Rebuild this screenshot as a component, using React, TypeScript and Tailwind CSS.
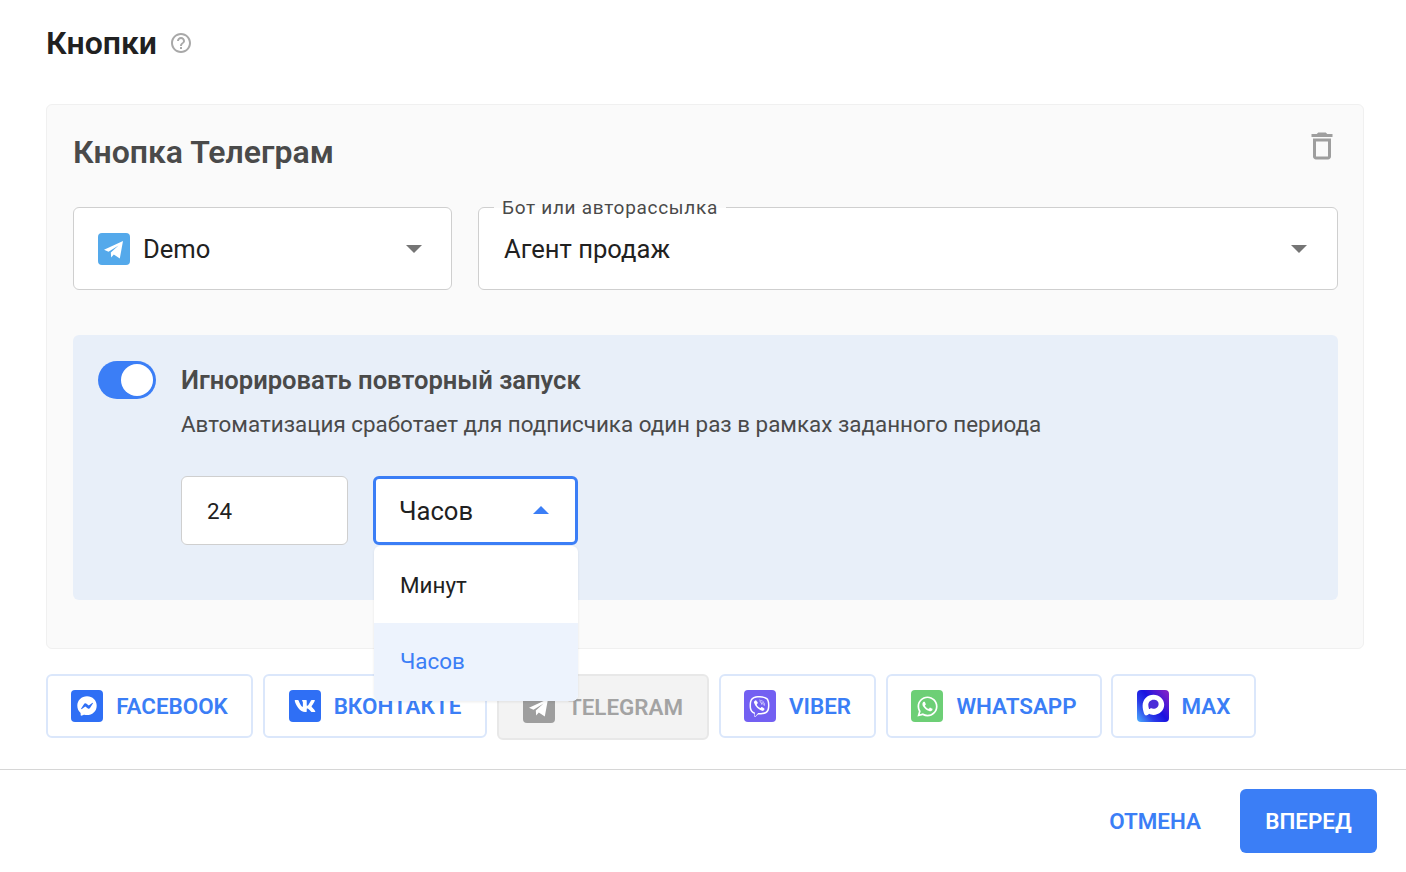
import { FaFacebookMessenger, FaVk, FaViber, FaWhatsapp } from "react-icons/fa";

function Tile({ className, children }: { className: string; children: React.ReactNode }) {
  return <span className={"flex h-8 w-8 shrink-0 items-center justify-center rounded-[4px] text-white " + className}>{children}</span>;
}

function Plane() {
  return (
    <svg width="32" height="32" viewBox="0 0 32 32" fill="#fff">
      <path d="M6 16.800 L25 8 L21.800 25.500 L15.800 21.600 L13.200 24.600 L12.800 19.600 L20.500 12.500 L10.500 18.800 Z" />
    </svg>
  );
}

function Arrow({ up, color }: { up?: boolean; color: string }) {
  return (
    <svg width="16" height="8" viewBox="0 0 16 8" className={up ? "mb-[2px] shrink-0" : "shrink-0"}>
      <path d={up ? "M0 8 L8 0 L16 8 Z" : "M0 0 L8 8 L16 0 Z"} fill={color} />
    </svg>
  );
}

function MaxLogo() {
  return (
    <svg width="32" height="32" viewBox="0 0 32 32">
      <defs>
        <linearGradient id="maxg" x1="0" y1="1" x2="1" y2="0.2">
          <stop offset="0" stopColor="#4fb4ff" />
          <stop offset="0.35" stopColor="#2a3be8" />
          <stop offset="0.6" stopColor="#1a12e0" />
          <stop offset="1" stopColor="#7a1fc9" />
        </linearGradient>
      </defs>
      <rect width="32" height="32" rx="4" fill="url(#maxg)" />
      <path d="M16.400 4.800C10.200 4.800 5.600 9.600 5.600 15.800c0 2.700.6 5 1.300 7.100.5 1.500 1.400 2.900 2.900 2.400 1-.3 1.600-.9 2.300-1.600 1.100.6 2.600 1.200 4.200 1.200 6 0 10.900-4.500 10.900-10.100 0-5.600-4.700-10-10.800-10z" fill="#fff" />
      <path d="M16.500 9.800c-2.900 0-5.200 2.400-5.200 5.300 0 1.300.3 2.500.6 3.400.2.600.6.7 1 .4l1-.8c.7.400 1.500.7 2.500.7 2.900 0 5.200-2.200 5.200-4.900 0-2.600-2.300-4.100-5.100-4.100z" fill="#4a2bd8" />
    </svg>
  );
}

function Channel({ icon, label, className }: { icon: React.ReactNode; label: string; className: string }) {
  return (
    <button className={"flex h-16 items-center justify-center gap-[13px] rounded-[6px] border-2 border-[#dbe7fb] bg-white text-[22.4px] font-semibold text-[#3b7ef6] " + className}>
      {icon}
      <span className="pt-[2px]">{label}</span>
    </button>
  );
}

export default function App() {
  return (
    <div className="flex h-[872px] w-[1406px] flex-col overflow-hidden bg-white font-['Roboto',sans-serif] text-[#212121]">
      <div className="flex-1 pl-[46px] pr-[42px]">
        <div className="flex h-[104px] items-start gap-[12px] pt-[22px]">
          <h1 className="text-[32px] font-semibold leading-[42px]">Кнопки</h1>
          <svg width="24" height="24" viewBox="0 0 24 24" className="mt-[9px]" fill="#a8a8a8">
            <path d="M11 18h2v-2h-2v2zm1-16C6.480 2 2 6.480 2 12s4.480 10 10 10 10-4.480 10-10S17.520 2 12 2zm0 18c-4.410 0-8-3.590-8-8s3.590-8 8-8 8 3.590 8 8-3.590 8-8 8zm0-14c-2.210 0-4 1.790-4 4h2c0-1.100.9-2 2-2s2 .9 2 2c0 2-3 1.750-3 5h2c0-2.250 3-2.500 3-5 0-2.210-1.790-4-4-4z" />
          </svg>
        </div>

        <section className="h-[545px] rounded-[6px] border border-[#f0f0f0] bg-[#fafafa] pl-[26px] pr-[25px]">
          <div className="flex h-[102px] items-start justify-between">
            <h2 className="pt-[26px] text-[32px] font-semibold leading-[42px] text-[#4a4a4a]">Кнопка Телеграм</h2>
            <svg width="36" height="36" viewBox="0 0 24 24" fill="#9e9e9e" className="mr-[-2px] mt-[23px]">
              <path d="M6 19c0 1.100.9 2 2 2h8c1.100 0 2-.9 2-2V7H6v12zM8 9h8v10H8V9zm7.500-5-1-1h-5l-1 1H5v2h14V4h-3.500z" />
            </svg>
          </div>

          <div className="flex gap-[26px]">
            <div className="flex h-[83px] w-[379px] items-center rounded-[6px] border border-[#cfcfcf] bg-white pl-6 pr-[29px]">
              <Tile className="bg-[#54a9eb]"><Plane /></Tile>
              <span className="ml-[13px] flex-1 pt-[2px] text-[25.6px]">Demo</span>
              <Arrow color="#757575" />
            </div>
            <div className="relative flex h-[83px] flex-1 items-center rounded-[6px] border border-[#cfcfcf] bg-white pl-[25px] pr-[30px]">
              <span className="absolute left-[15px] top-[-10px] bg-[linear-gradient(#fafafa_50%,#fff_50%)] px-2 text-[19px] leading-[20px] tracking-[0.7px] text-[#4a4a4a]">Бот или авторассылка</span>
              <span className="flex-1 pt-[2px] text-[25.6px]">Агент продаж</span>
              <Arrow color="#757575" />
            </div>
          </div>

          <div className="mt-[45px] flex h-[265px] gap-[25px] rounded-[6px] bg-[#e8eff9] pl-[25px] pt-[26px]">
            <div className="flex h-[38px] w-[58px] shrink-0 items-center justify-end rounded-full bg-[#3b7ef6] pr-[3px]">
              <span className="h-[32px] w-[32px] rounded-full bg-white" />
            </div>
            <div className="flex-1">
              <div className="text-[25.6px] font-semibold leading-[38px] text-[#4a4a4a]">Игнорировать повторный запуск</div>
              <div className="mt-[10px] text-[22.4px] leading-[30px] text-[#4a4a4a]">Автоматизация сработает для подписчика один раз в рамках заданного периода</div>
              <div className="mt-[37px] flex gap-[25px]">
                <div className="flex h-[69px] w-[167px] items-center rounded-[6px] border border-[#cfcfcf] bg-white pl-[25px] pt-[3px] text-[22.4px]">24</div>
                <div className="relative z-10 w-[205px]">
                  <div className="flex h-[69px] items-center rounded-[6px] border-[3px] border-[#3b7ef6] bg-white pl-[23px] pr-[26px]">
                    <span className="flex-1 pt-[1px] text-[25.6px]">Часов</span>
                    <Arrow up color="#3b7ef6" />
                  </div>
                  <div className="absolute left-[1px] right-0 top-[70px] overflow-hidden rounded-[6px] bg-white shadow-[0_1px_3px_rgba(0,0,0,0.08)]">
                    <div className="flex h-[77px] items-center pl-[26px] pt-[3px] text-[22.4px]">Минут</div>
                    <div className="flex h-[78px] items-center bg-[#edf3fd] pl-[26px] text-[22.4px] text-[#3b7ef6]">Часов</div>
                  </div>
                </div>
              </div>
            </div>
          </div>
        </section>

        <div className="mt-[25px] flex items-start gap-[10px]">
          <Channel className="w-[207px]" label="FACEBOOK" icon={<Tile className="bg-[#2f6ff5]"><FaFacebookMessenger size={20} /></Tile>} />
          <Channel className="w-[224px]" label="ВКОНТАКТЕ" icon={<Tile className="bg-[#2f6ff5]"><FaVk size={22} /></Tile>} />
          <button className="flex h-[66px] w-[212px] items-center justify-center gap-[13px] rounded-[6px] border-2 border-[#e8e8e8] bg-[#f3f3f3] text-[22.4px] font-semibold text-[#a3a3a3]">
            <Tile className="bg-[#9e9e9e]"><Plane /></Tile>
            <span className="pt-[2px]">TELEGRAM</span>
          </button>
          <Channel className="w-[157px]" label="VIBER" icon={<Tile className="bg-[#7360f2]"><FaViber size={21} /></Tile>} />
          <Channel className="w-[216px]" label="WHATSAPP" icon={<Tile className="bg-[#6dcf76]"><FaWhatsapp size={23} /></Tile>} />
          <Channel className="ml-[-1px] w-[145px]" label="MAX" icon={<MaxLogo />} />
        </div>
      </div>

      <footer className="flex h-[103px] items-start justify-end gap-[39px] border-t border-[#d6d6d6] pr-[29px] pt-[19px]">
        <button className="h-16 pt-[2px] text-[22.4px] font-semibold text-[#3b7ef6]">ОТМЕНА</button>
        <button className="h-16 w-[137px] rounded-[6px] bg-[#3b7ef6] pt-[2px] text-[22.4px] font-semibold text-white">ВПЕРЕД</button>
      </footer>
    </div>
  );
}
